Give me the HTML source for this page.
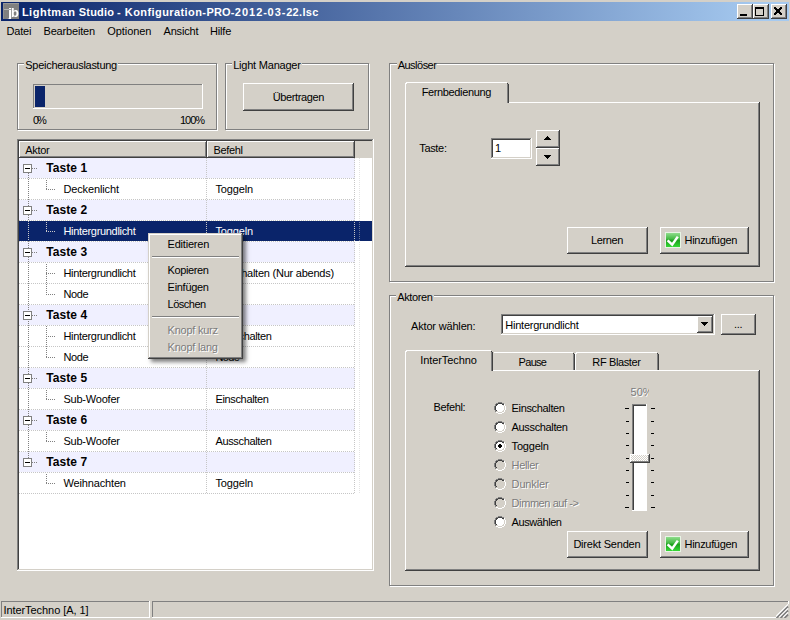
<!DOCTYPE html>
<html><head><meta charset="utf-8"><title>Lightman Studio</title>
<style>
*{box-sizing:border-box;margin:0;padding:0}
html,body{width:790px;height:620px;overflow:hidden;background:#d4d0c8}
body{position:relative;font-family:"Liberation Sans",sans-serif;font-size:11px;color:#000}
.a{position:absolute}
.t{position:absolute;white-space:pre}
.dis{color:#7c7c7c;text-shadow:1px 1px 0 #fff}
.btn{position:absolute;background:#d4d0c8;box-shadow:inset -1px -1px 0 #404040,inset 1px 1px 0 #fff,inset -2px -2px 0 #808080,inset 2px 2px 0 #d4d0c8}
.sunk{position:absolute;background:#fff;box-shadow:inset -1px -1px 0 #fff,inset 1px 1px 0 #808080,inset -2px -2px 0 #d4d0c8,inset 2px 2px 0 #404040}
.grp{position:absolute;border:1px solid #808080;box-shadow:1px 1px 0 #fff,inset 1px 1px 0 #fff}
.page{position:absolute;box-shadow:inset -1px -1px 0 #404040,inset 1px 1px 0 #fff,inset -2px -2px 0 #808080}
.tab{position:absolute;background:#d4d0c8}
.hl{position:absolute;height:1px;background-image:linear-gradient(90deg,#808080 50%,transparent 50%);background-size:2px 1px}
.vl{position:absolute;width:1px;background-image:linear-gradient(180deg,#808080 50%,transparent 50%);background-size:1px 2px}
.gl{position:absolute;height:1px;background-image:linear-gradient(90deg,#c6c6c6 50%,transparent 50%);background-size:2px 1px}
.gv{position:absolute;width:1px;background-image:linear-gradient(180deg,#c6c6c6 50%,transparent 50%);background-size:1px 2px}
</style></head><body>

<div class="a" style="left:1px;top:2px;width:788px;height:19px;background:linear-gradient(90deg,#0a246a 0%,#a6caf0 97%)"></div>
<div class="a" style="left:3px;top:3px;width:16px;height:16px;background:#808080;overflow:hidden"><div class="a" style="left:0;top:0;width:16px;height:1px;background:#989898"></div><div class="a" style="left:0;top:0;width:1px;height:16px;background:#909090"></div><div class="a" style="left:1px;top:6px;width:5px;height:1px;background:#b4b4b4"></div><span class="t" style="left:4.600px;top:3px;font-size:12px;line-height:14px;font-weight:bold;color:#fff;transform:scaleX(1.250);transform-origin:0 0">j</span><span class="t" style="left:7.600px;top:3px;font-size:12px;line-height:14px;font-weight:bold;color:#fff;transform:scaleX(1.080);transform-origin:0 0">b</span></div>
<div class="btn" style="left:737px;top:4px;width:16px;height:15px;"><div class="a" style="left:3px;top:10px;width:7px;height:2px;background:#000"></div></div>
<div class="btn" style="left:753px;top:4px;width:16px;height:15px;"><div class="a" style="left:2px;top:3px;width:9px;height:9px;border:1px solid #000;border-top-width:2px"></div></div>
<div class="btn" style="left:771px;top:4px;width:16px;height:15px;"><svg class="a" style="left:3px;top:3px" width="8" height="8" viewBox="0 0 8 7" preserveAspectRatio="none"><path d="M0 0h2l2 2 2-2h2v1l-2.5 2.5L8 6v1H6L4 5 2 7H0V6l2.5-2.500L0 1z" fill="#000" shape-rendering="crispEdges"/></svg></div>
<div class="grp" style="left:17px;top:63px;width:200px;height:67px;"></div>
<div class="grp" style="left:225px;top:63px;width:144px;height:67px;"></div>
<div class="a" style="left:33px;top:84px;width:170px;height:25px;box-shadow:inset -1px -1px 0 #fff,inset 1px 1px 0 #808080"></div>
<div class="a" style="left:35px;top:86px;width:10px;height:21px;background:#0a246a"></div>
<div class="btn" style="left:243px;top:83px;width:111px;height:28px;"></div>
<div class="sunk" style="left:17px;top:139px;width:357px;height:432px;"></div>
<div class="a" style="left:19px;top:141px;width:188px;height:17px;background:#d4d0c8;box-shadow:inset -1px -1px 0 #404040,inset 1px 1px 0 #fff,inset -2px -2px 0 #808080"></div>
<div class="a" style="left:207px;top:141px;width:148px;height:17px;background:#d4d0c8;box-shadow:inset -1px -1px 0 #404040,inset 1px 1px 0 #fff,inset -2px -2px 0 #808080"></div>
<div class="a" style="left:355px;top:141px;width:17px;height:17px;background:#d4d0c8"></div>
<div class="a" style="left:19px;top:158px;width:336px;height:20px;background:#f0f0ff"></div>
<div class="gl" style="left:19px;top:178px;width:336px;height:1px;"></div>
<div class="gl" style="left:19px;top:199px;width:336px;height:1px;"></div>
<div class="a" style="left:19px;top:200px;width:336px;height:20px;background:#f0f0ff"></div>
<div class="gl" style="left:19px;top:220px;width:336px;height:1px;"></div>
<div class="a" style="left:19px;top:221px;width:353px;height:20px;background:#0a246a"></div>
<div class="gl" style="left:19px;top:241px;width:336px;height:1px;"></div>
<div class="a" style="left:19px;top:242px;width:336px;height:20px;background:#f0f0ff"></div>
<div class="gl" style="left:19px;top:262px;width:336px;height:1px;"></div>
<div class="gl" style="left:19px;top:283px;width:336px;height:1px;"></div>
<div class="gl" style="left:19px;top:304px;width:336px;height:1px;"></div>
<div class="a" style="left:19px;top:305px;width:336px;height:20px;background:#f0f0ff"></div>
<div class="gl" style="left:19px;top:325px;width:336px;height:1px;"></div>
<div class="gl" style="left:19px;top:346px;width:336px;height:1px;"></div>
<div class="gl" style="left:19px;top:367px;width:336px;height:1px;"></div>
<div class="a" style="left:19px;top:368px;width:336px;height:20px;background:#f0f0ff"></div>
<div class="gl" style="left:19px;top:388px;width:336px;height:1px;"></div>
<div class="gl" style="left:19px;top:409px;width:336px;height:1px;"></div>
<div class="a" style="left:19px;top:410px;width:336px;height:20px;background:#f0f0ff"></div>
<div class="gl" style="left:19px;top:430px;width:336px;height:1px;"></div>
<div class="gl" style="left:19px;top:451px;width:336px;height:1px;"></div>
<div class="a" style="left:19px;top:452px;width:336px;height:20px;background:#f0f0ff"></div>
<div class="gl" style="left:19px;top:472px;width:336px;height:1px;"></div>
<div class="gl" style="left:19px;top:493px;width:336px;height:1px;"></div>
<div class="gv" style="left:206px;top:158px;width:1px;height:336px;"></div>
<div class="gv" style="left:354px;top:158px;width:1px;height:336px;"></div>
<div class="gv" style="left:359px;top:158px;width:1px;height:336px;opacity:.5"></div>
<div class="vl" style="left:28px;top:173px;width:1px;height:285px;"></div>
<div class="hl" style="left:32px;top:168px;width:6px;height:1px;"></div>
<div class="a" style="left:23px;top:164px;width:9px;height:9px;background:#fff;border:1px solid #808080"><div class="a" style="left:1px;top:3px;width:5px;height:1px;background:#000"></div></div>
<div class="vl" style="left:46px;top:180px;width:1px;height:9px;"></div>
<div class="hl" style="left:46px;top:189px;width:9px;height:1px;"></div>
<div class="hl" style="left:32px;top:210px;width:6px;height:1px;"></div>
<div class="a" style="left:23px;top:206px;width:9px;height:9px;background:#fff;border:1px solid #808080"><div class="a" style="left:1px;top:3px;width:5px;height:1px;background:#000"></div></div>
<div class="vl" style="left:46px;top:222px;width:1px;height:9px;filter:invert(1) brightness(1.6);"></div>
<div class="hl" style="left:46px;top:231px;width:9px;height:1px;filter:invert(1) brightness(1.6);"></div>
<div class="hl" style="left:32px;top:252px;width:6px;height:1px;"></div>
<div class="a" style="left:23px;top:248px;width:9px;height:9px;background:#fff;border:1px solid #808080"><div class="a" style="left:1px;top:3px;width:5px;height:1px;background:#000"></div></div>
<div class="vl" style="left:46px;top:264px;width:1px;height:9px;"></div>
<div class="hl" style="left:46px;top:273px;width:9px;height:1px;"></div>
<div class="vl" style="left:46px;top:274px;width:1px;height:20px;"></div>
<div class="hl" style="left:46px;top:294px;width:9px;height:1px;"></div>
<div class="hl" style="left:32px;top:315px;width:6px;height:1px;"></div>
<div class="a" style="left:23px;top:311px;width:9px;height:9px;background:#fff;border:1px solid #808080"><div class="a" style="left:1px;top:3px;width:5px;height:1px;background:#000"></div></div>
<div class="vl" style="left:46px;top:326px;width:1px;height:10px;"></div>
<div class="hl" style="left:46px;top:336px;width:9px;height:1px;"></div>
<div class="vl" style="left:46px;top:336px;width:1px;height:21px;"></div>
<div class="hl" style="left:46px;top:357px;width:9px;height:1px;"></div>
<div class="hl" style="left:32px;top:378px;width:6px;height:1px;"></div>
<div class="a" style="left:23px;top:374px;width:9px;height:9px;background:#fff;border:1px solid #808080"><div class="a" style="left:1px;top:3px;width:5px;height:1px;background:#000"></div></div>
<div class="vl" style="left:46px;top:390px;width:1px;height:9px;"></div>
<div class="hl" style="left:46px;top:399px;width:9px;height:1px;"></div>
<div class="hl" style="left:32px;top:420px;width:6px;height:1px;"></div>
<div class="a" style="left:23px;top:416px;width:9px;height:9px;background:#fff;border:1px solid #808080"><div class="a" style="left:1px;top:3px;width:5px;height:1px;background:#000"></div></div>
<div class="vl" style="left:46px;top:432px;width:1px;height:9px;"></div>
<div class="hl" style="left:46px;top:441px;width:9px;height:1px;"></div>
<div class="hl" style="left:32px;top:462px;width:6px;height:1px;"></div>
<div class="a" style="left:23px;top:458px;width:9px;height:9px;background:#fff;border:1px solid #808080"><div class="a" style="left:1px;top:3px;width:5px;height:1px;background:#000"></div></div>
<div class="vl" style="left:46px;top:474px;width:1px;height:9px;"></div>
<div class="hl" style="left:46px;top:483px;width:9px;height:1px;"></div>
<div class="grp" style="left:389px;top:63px;width:385px;height:219px;"></div>
<div class="grp" style="left:389px;top:295px;width:385px;height:291px;"></div>
<div class="page" style="left:405px;top:102px;width:355px;height:165px;"></div>
<div class="tab" style="left:405px;top:82px;width:104px;height:21px;box-shadow:inset -1px 0 0 #404040,inset 1px 0 0 #fff,inset 0 1px 0 #fff,inset -2px 0 0 #808080"></div>
<div class="a" style="left:405px;top:82px;width:1px;height:1px;background:#d4d0c8"></div>
<div class="a" style="left:406px;top:83px;width:1px;height:1px;background:#fff"></div>
<div class="a" style="left:507px;top:82px;width:2px;height:1px;background:#d4d0c8"></div>
<div class="a" style="left:507px;top:83px;width:1px;height:1px;background:#404040"></div>
<div class="a" style="left:508px;top:83px;width:1px;height:1px;background:#d4d0c8"></div>
<div class="page" style="left:405px;top:370px;width:355px;height:201px;"></div>
<div class="tab" style="left:493px;top:352px;width:82px;height:18px;box-shadow:inset -1px 0 0 #404040,inset 0 1px 0 #fff,inset -2px 0 0 #808080"></div>
<div class="a" style="left:493px;top:352px;width:1px;height:1px;background:#d4d0c8"></div>
<div class="a" style="left:573px;top:352px;width:2px;height:1px;background:#d4d0c8"></div>
<div class="a" style="left:573px;top:353px;width:1px;height:1px;background:#404040"></div>
<div class="a" style="left:574px;top:353px;width:1px;height:1px;background:#d4d0c8"></div>
<div class="tab" style="left:575px;top:352px;width:84px;height:18px;box-shadow:inset -1px 0 0 #404040,inset 1px 0 0 #fff,inset 0 1px 0 #fff,inset -2px 0 0 #808080"></div>
<div class="a" style="left:575px;top:352px;width:1px;height:1px;background:#d4d0c8"></div>
<div class="a" style="left:576px;top:353px;width:1px;height:1px;background:#fff"></div>
<div class="a" style="left:657px;top:352px;width:2px;height:1px;background:#d4d0c8"></div>
<div class="a" style="left:657px;top:353px;width:1px;height:1px;background:#404040"></div>
<div class="a" style="left:658px;top:353px;width:1px;height:1px;background:#d4d0c8"></div>
<div class="tab" style="left:405px;top:350px;width:88px;height:21px;box-shadow:inset -1px 0 0 #404040,inset 1px 0 0 #fff,inset 0 1px 0 #fff,inset -2px 0 0 #808080"></div>
<div class="a" style="left:405px;top:350px;width:1px;height:1px;background:#d4d0c8"></div>
<div class="a" style="left:406px;top:351px;width:1px;height:1px;background:#fff"></div>
<div class="a" style="left:491px;top:350px;width:2px;height:1px;background:#d4d0c8"></div>
<div class="a" style="left:491px;top:351px;width:1px;height:1px;background:#404040"></div>
<div class="a" style="left:492px;top:351px;width:1px;height:1px;background:#d4d0c8"></div>
<div class="sunk" style="left:491px;top:138px;width:41px;height:21px;"></div>
<div class="btn" style="left:536px;top:130px;width:24px;height:18px;"><svg class="a" style="left:8px;top:6px" width="7" height="4"><path d="M3 0h1v1h1v1h1v1h1v1H0V3h1V2h1V1h1z" fill="#000" shape-rendering="crispEdges"/></svg></div>
<div class="btn" style="left:536px;top:148px;width:24px;height:18px;"><svg class="a" style="left:8px;top:7px" width="7" height="4"><path d="M0 0h7v1H6v1H5v1H4v1H3V3H2V2H1V1H0z" fill="#000" shape-rendering="crispEdges"/></svg></div>
<div class="btn" style="left:567px;top:227px;width:81px;height:27px;"></div>
<div class="btn" style="left:660px;top:227px;width:89px;height:27px;"><svg class="a" style="left:5px;top:5px" width="16" height="16" viewBox="0 0 16 16"><defs><linearGradient id="g1" x1="0" y1="0" x2="0" y2="1"><stop offset="0" stop-color="#8fdc8c"/><stop offset=".45" stop-color="#3fb83f"/><stop offset=".5" stop-color="#1a9c1a"/><stop offset="1" stop-color="#35d835"/></linearGradient></defs><rect x="0" y="0" width="16" height="16" fill="#e8f4e4"/><rect x="1" y="1" width="14" height="14" fill="url(#g1)"/><path d="M2.600 8.300 L7.200 12.600 L12.800 4.600" fill="none" stroke="#fff" stroke-width="2.500"/></svg></div>
<div class="btn" style="left:567px;top:531px;width:81px;height:27px;"></div>
<div class="btn" style="left:660px;top:531px;width:89px;height:27px;"><svg class="a" style="left:5px;top:5px" width="16" height="16" viewBox="0 0 16 16"><defs><linearGradient id="g2" x1="0" y1="0" x2="0" y2="1"><stop offset="0" stop-color="#8fdc8c"/><stop offset=".45" stop-color="#3fb83f"/><stop offset=".5" stop-color="#1a9c1a"/><stop offset="1" stop-color="#35d835"/></linearGradient></defs><rect x="0" y="0" width="16" height="16" fill="#e8f4e4"/><rect x="1" y="1" width="14" height="14" fill="url(#g2)"/><path d="M2.600 8.300 L7.200 12.600 L12.800 4.600" fill="none" stroke="#fff" stroke-width="2.500"/></svg></div>
<div class="sunk" style="left:501px;top:314px;width:214px;height:21px;"></div>
<div class="btn" style="left:697px;top:316px;width:16px;height:17px;"><svg class="a" style="left:4px;top:6px" width="7" height="4"><path d="M0 0h7v1H6v1H5v1H4v1H3V3H2V2H1V1H0z" fill="#000" shape-rendering="crispEdges"/></svg></div>
<div class="btn" style="left:721px;top:314px;width:35px;height:21px;"></div>
<svg class="a" style="left:494px;top:402px" width="12" height="12" viewBox="0 0 12 12" shape-rendering="crispEdges"><path d="M4 0h4v1H4zM2 1h2v1H2zM8 1h2v1H8zM1 2h1v2H1zM0 4h1v4H0zM1 8h1v2H1z" fill="#808080"/><path d="M4 1h4v1H4zM2 2h2v1H2zM8 2h2v1H8zM2 3h1v1H2zM1 4h1v4H1zM2 8h1v1H2z" fill="#404040"/><path d="M10 2h1v2h-1zM11 4h1v4h-1zM10 8h1v2h-1zM8 10h2v1H8zM2 10h2v1H2zM4 11h4v1H4z" fill="#fff"/><path d="M9 3h1v1H9zM10 4h1v4h-1zM9 8h1v1H9zM8 9h2v1H8zM2 9h2v1H2zM4 10h4v1H4z" fill="#d4d0c8"/><path d="M4 2h4v1h1v1h1v4H9v1H8v1H4V9H3V8H2V4h1V3h1z" fill="#fff"/></svg>
<svg class="a" style="left:494px;top:421px" width="12" height="12" viewBox="0 0 12 12" shape-rendering="crispEdges"><path d="M4 0h4v1H4zM2 1h2v1H2zM8 1h2v1H8zM1 2h1v2H1zM0 4h1v4H0zM1 8h1v2H1z" fill="#808080"/><path d="M4 1h4v1H4zM2 2h2v1H2zM8 2h2v1H8zM2 3h1v1H2zM1 4h1v4H1zM2 8h1v1H2z" fill="#404040"/><path d="M10 2h1v2h-1zM11 4h1v4h-1zM10 8h1v2h-1zM8 10h2v1H8zM2 10h2v1H2zM4 11h4v1H4z" fill="#fff"/><path d="M9 3h1v1H9zM10 4h1v4h-1zM9 8h1v1H9zM8 9h2v1H8zM2 9h2v1H2zM4 10h4v1H4z" fill="#d4d0c8"/><path d="M4 2h4v1h1v1h1v4H9v1H8v1H4V9H3V8H2V4h1V3h1z" fill="#fff"/></svg>
<svg class="a" style="left:494px;top:440px" width="12" height="12" viewBox="0 0 12 12" shape-rendering="crispEdges"><path d="M4 0h4v1H4zM2 1h2v1H2zM8 1h2v1H8zM1 2h1v2H1zM0 4h1v4H0zM1 8h1v2H1z" fill="#808080"/><path d="M4 1h4v1H4zM2 2h2v1H2zM8 2h2v1H8zM2 3h1v1H2zM1 4h1v4H1zM2 8h1v1H2z" fill="#404040"/><path d="M10 2h1v2h-1zM11 4h1v4h-1zM10 8h1v2h-1zM8 10h2v1H8zM2 10h2v1H2zM4 11h4v1H4z" fill="#fff"/><path d="M9 3h1v1H9zM10 4h1v4h-1zM9 8h1v1H9zM8 9h2v1H8zM2 9h2v1H2zM4 10h4v1H4z" fill="#d4d0c8"/><path d="M4 2h4v1h1v1h1v4H9v1H8v1H4V9H3V8H2V4h1V3h1z" fill="#fff"/><path d="M5 4h2v1h1v2H7v1H5V7H4V5h1z" fill="#000"/></svg>
<svg class="a" style="left:494px;top:459px" width="12" height="12" viewBox="0 0 12 12" shape-rendering="crispEdges"><path d="M4 0h4v1H4zM2 1h2v1H2zM8 1h2v1H8zM1 2h1v2H1zM0 4h1v4H0zM1 8h1v2H1z" fill="#808080"/><path d="M4 1h4v1H4zM2 2h2v1H2zM8 2h2v1H8zM2 3h1v1H2zM1 4h1v4H1zM2 8h1v1H2z" fill="#404040"/><path d="M10 2h1v2h-1zM11 4h1v4h-1zM10 8h1v2h-1zM8 10h2v1H8zM2 10h2v1H2zM4 11h4v1H4z" fill="#fff"/><path d="M9 3h1v1H9zM10 4h1v4h-1zM9 8h1v1H9zM8 9h2v1H8zM2 9h2v1H2zM4 10h4v1H4z" fill="#d4d0c8"/><path d="M4 2h4v1h1v1h1v4H9v1H8v1H4V9H3V8H2V4h1V3h1z" fill="#d4d0c8"/></svg>
<svg class="a" style="left:494px;top:478px" width="12" height="12" viewBox="0 0 12 12" shape-rendering="crispEdges"><path d="M4 0h4v1H4zM2 1h2v1H2zM8 1h2v1H8zM1 2h1v2H1zM0 4h1v4H0zM1 8h1v2H1z" fill="#808080"/><path d="M4 1h4v1H4zM2 2h2v1H2zM8 2h2v1H8zM2 3h1v1H2zM1 4h1v4H1zM2 8h1v1H2z" fill="#404040"/><path d="M10 2h1v2h-1zM11 4h1v4h-1zM10 8h1v2h-1zM8 10h2v1H8zM2 10h2v1H2zM4 11h4v1H4z" fill="#fff"/><path d="M9 3h1v1H9zM10 4h1v4h-1zM9 8h1v1H9zM8 9h2v1H8zM2 9h2v1H2zM4 10h4v1H4z" fill="#d4d0c8"/><path d="M4 2h4v1h1v1h1v4H9v1H8v1H4V9H3V8H2V4h1V3h1z" fill="#d4d0c8"/></svg>
<svg class="a" style="left:494px;top:497px" width="12" height="12" viewBox="0 0 12 12" shape-rendering="crispEdges"><path d="M4 0h4v1H4zM2 1h2v1H2zM8 1h2v1H8zM1 2h1v2H1zM0 4h1v4H0zM1 8h1v2H1z" fill="#808080"/><path d="M4 1h4v1H4zM2 2h2v1H2zM8 2h2v1H8zM2 3h1v1H2zM1 4h1v4H1zM2 8h1v1H2z" fill="#404040"/><path d="M10 2h1v2h-1zM11 4h1v4h-1zM10 8h1v2h-1zM8 10h2v1H8zM2 10h2v1H2zM4 11h4v1H4z" fill="#fff"/><path d="M9 3h1v1H9zM10 4h1v4h-1zM9 8h1v1H9zM8 9h2v1H8zM2 9h2v1H2zM4 10h4v1H4z" fill="#d4d0c8"/><path d="M4 2h4v1h1v1h1v4H9v1H8v1H4V9H3V8H2V4h1V3h1z" fill="#d4d0c8"/></svg>
<svg class="a" style="left:494px;top:516px" width="12" height="12" viewBox="0 0 12 12" shape-rendering="crispEdges"><path d="M4 0h4v1H4zM2 1h2v1H2zM8 1h2v1H8zM1 2h1v2H1zM0 4h1v4H0zM1 8h1v2H1z" fill="#808080"/><path d="M4 1h4v1H4zM2 2h2v1H2zM8 2h2v1H8zM2 3h1v1H2zM1 4h1v4H1zM2 8h1v1H2z" fill="#404040"/><path d="M10 2h1v2h-1zM11 4h1v4h-1zM10 8h1v2h-1zM8 10h2v1H8zM2 10h2v1H2zM4 11h4v1H4z" fill="#fff"/><path d="M9 3h1v1H9zM10 4h1v4h-1zM9 8h1v1H9zM8 9h2v1H8zM2 9h2v1H2zM4 10h4v1H4z" fill="#d4d0c8"/><path d="M4 2h4v1h1v1h1v4H9v1H8v1H4V9H3V8H2V4h1V3h1z" fill="#fff"/></svg>
<div class="a" style="left:632px;top:404px;width:15px;height:107px;background:#fff;box-shadow:inset -1px -1px 0 #fff,inset 1px 1px 0 #808080,inset 2px 2px 0 #404040"></div>
<div class="a" style="left:625px;top:408px;width:4px;height:1px;background:#000"></div>
<div class="a" style="left:651px;top:408px;width:4px;height:1px;background:#000"></div>
<div class="a" style="left:626px;top:421px;width:3px;height:1px;background:#000"></div>
<div class="a" style="left:651px;top:421px;width:3px;height:1px;background:#000"></div>
<div class="a" style="left:626px;top:433px;width:3px;height:1px;background:#000"></div>
<div class="a" style="left:651px;top:433px;width:3px;height:1px;background:#000"></div>
<div class="a" style="left:626px;top:445px;width:3px;height:1px;background:#000"></div>
<div class="a" style="left:651px;top:445px;width:3px;height:1px;background:#000"></div>
<div class="a" style="left:626px;top:458px;width:3px;height:1px;background:#000"></div>
<div class="a" style="left:651px;top:458px;width:3px;height:1px;background:#000"></div>
<div class="a" style="left:626px;top:470px;width:3px;height:1px;background:#000"></div>
<div class="a" style="left:651px;top:470px;width:3px;height:1px;background:#000"></div>
<div class="a" style="left:626px;top:482px;width:3px;height:1px;background:#000"></div>
<div class="a" style="left:651px;top:482px;width:3px;height:1px;background:#000"></div>
<div class="a" style="left:626px;top:495px;width:3px;height:1px;background:#000"></div>
<div class="a" style="left:651px;top:495px;width:3px;height:1px;background:#000"></div>
<div class="a" style="left:625px;top:507px;width:4px;height:1px;background:#000"></div>
<div class="a" style="left:651px;top:507px;width:4px;height:1px;background:#000"></div>
<div class="a" style="left:630px;top:454px;width:20px;height:9px;background-color:#d4d0c8;background-image:conic-gradient(#fff 25%,#d4d0c8 0 50%,#fff 0 75%,#d4d0c8 0);background-size:2px 2px;box-shadow:inset -1px -1px 0 #404040,inset 1px 1px 0 #fff,inset -2px -2px 0 #808080"></div>
<div class="a" style="left:1px;top:601px;width:149px;height:17px;box-shadow:inset -1px -1px 0 #fff,inset 1px 1px 0 #808080"></div>
<div class="a" style="left:152px;top:601px;width:637px;height:17px;box-shadow:inset -1px -1px 0 #fff,inset 1px 1px 0 #808080"></div>
<svg class="a" style="left:776px;top:604px" width="13" height="14" viewBox="0 -1 13 14"><rect x="0" y="12" width="13" height="1" fill="#d4d0c8"/><rect x="12" y="-1" width="1" height="14" fill="#d4d0c8"/><path d="M0.500 13L12 1.500M4.500 13L12 5.500M8.500 13L12 9.500" stroke="#808080" stroke-width="1.900"/><path d="M-0.700 12.100L12 -0.600M3.300 12.100L12 3.400M7.300 12.100L12 7.400" stroke="#fff" stroke-width="1.100"/></svg>
<div class="vl" style="left:28px;top:221px;width:1px;height:20px;filter:invert(1) brightness(1.600)"></div>
<span class="t" style="left:21.90px;top:6.00px;font-size:11px;line-height:13px;letter-spacing:0.514px;font-weight:bold;color:#fff;">Lightman</span>
<span class="t" style="left:78.80px;top:6.00px;font-size:11px;line-height:13px;letter-spacing:0.196px;font-weight:bold;color:#fff;">Studio</span>
<span class="t" style="left:116.90px;top:6.00px;font-size:11px;line-height:13px;letter-spacing:0.000px;font-weight:bold;color:#fff;">-</span>
<span class="t" style="left:124.80px;top:6.00px;font-size:11px;line-height:13px;letter-spacing:0.418px;font-weight:bold;color:#fff;">Konfiguration-</span>
<span class="t" style="left:206.40px;top:6.00px;font-size:11px;line-height:13px;letter-spacing:0.200px;font-weight:bold;color:#fff;">PRO-</span>
<span class="t" style="left:234.80px;top:6.00px;font-size:11px;line-height:13px;letter-spacing:1.015px;font-weight:bold;color:#fff;">2012-</span>
<span class="t" style="left:267.50px;top:6.00px;font-size:11px;line-height:13px;letter-spacing:1.047px;font-weight:bold;color:#fff;">03-</span>
<span class="t" style="left:286.20px;top:6.00px;font-size:11px;line-height:13px;letter-spacing:0.301px;font-weight:bold;color:#fff;">22.lsc</span>
<span class="t" style="left:6.60px;top:25.00px;font-size:11px;line-height:13px;letter-spacing:-0.222px;">Datei</span>
<span class="t" style="left:43.50px;top:25.00px;font-size:11px;line-height:13px;letter-spacing:-0.169px;">Bearbeiten</span>
<span class="t" style="left:107.30px;top:25.00px;font-size:11px;line-height:13px;letter-spacing:-0.079px;">Optionen</span>
<span class="t" style="left:163.50px;top:25.00px;font-size:11px;line-height:13px;letter-spacing:-0.180px;">Ansicht</span>
<span class="t" style="left:210.00px;top:25.00px;font-size:11px;line-height:13px;letter-spacing:-0.154px;">Hilfe</span>
<span class="t" style="left:25.30px;top:59.00px;font-size:11px;line-height:13px;letter-spacing:-0.278px;background:#d4d0c8;padding:0 1px 0 1px;margin-left:-1px">Speicherauslastung</span>
<span class="t" style="left:33.00px;top:114.00px;font-size:11px;line-height:13px;letter-spacing:-2.106px;">0%</span>
<span class="t" style="left:180.00px;top:114.00px;font-size:11px;line-height:13px;letter-spacing:-1.047px;">100%</span>
<span class="t" style="left:233.20px;top:59.00px;font-size:11px;line-height:13px;letter-spacing:-0.219px;background:#d4d0c8;padding:0 1px 0 1px;margin-left:-1px">Light Manager</span>
<span class="t" style="left:272.80px;top:91.00px;font-size:11px;line-height:13px;letter-spacing:-0.394px;">Übertragen</span>
<span class="t" style="left:25.30px;top:144.00px;font-size:11px;line-height:13px;letter-spacing:-0.347px;">Aktor</span>
<span class="t" style="left:213.50px;top:144.00px;font-size:11px;line-height:13px;letter-spacing:-0.341px;">Befehl</span>
<span class="t" style="left:397.70px;top:59.00px;font-size:11px;line-height:13px;letter-spacing:-0.514px;background:#d4d0c8;padding:0 1px 0 1px;margin-left:-1px">Auslöser</span>
<span class="t" style="left:421.70px;top:86.00px;font-size:11px;line-height:13px;letter-spacing:-0.368px;">Fernbedienung</span>
<span class="t" style="left:419.20px;top:142.00px;font-size:11px;line-height:13px;letter-spacing:-0.312px;">Taste:</span>
<span class="t" style="left:495.00px;top:142.00px;font-size:11px;line-height:13px;letter-spacing:0.000px;">1</span>
<span class="t" style="left:591.00px;top:234.00px;font-size:11px;line-height:13px;letter-spacing:-0.353px;">Lernen</span>
<span class="t" style="left:684.60px;top:234.00px;font-size:11px;line-height:13px;letter-spacing:-0.317px;">Hinzufügen</span>
<span class="t" style="left:397.20px;top:291.00px;font-size:11px;line-height:13px;letter-spacing:-0.354px;background:#d4d0c8;padding:0 1px 0 1px;margin-left:-1px">Aktoren</span>
<span class="t" style="left:411.00px;top:320.00px;font-size:11px;line-height:13px;letter-spacing:-0.171px;">Aktor wählen:</span>
<span class="t" style="left:505.30px;top:319.00px;font-size:11px;line-height:13px;letter-spacing:-0.243px;">Hintergrundlicht</span>
<span class="t" style="left:734.00px;top:318.00px;font-size:11px;line-height:13px;letter-spacing:-0.336px;">...</span>
<span class="t" style="left:420.20px;top:354.00px;font-size:11px;line-height:13px;letter-spacing:-0.068px;">InterTechno</span>
<span class="t" style="left:518.60px;top:356.00px;font-size:11px;line-height:13px;letter-spacing:-0.701px;">Pause</span>
<span class="t" style="left:592.30px;top:356.00px;font-size:11px;line-height:13px;letter-spacing:-0.363px;">RF Blaster</span>
<span class="t" style="left:433.60px;top:401.00px;font-size:11px;line-height:13px;letter-spacing:-0.375px;">Befehl:</span>
<span class="t dis" style="left:630.60px;top:386.00px;font-size:11px;line-height:13px;letter-spacing:0.000px;width:18.5px;overflow:hidden">50%</span>
<span class="t" style="left:573.40px;top:538.00px;font-size:11px;line-height:13px;letter-spacing:-0.210px;">Direkt Senden</span>
<span class="t" style="left:684.60px;top:538.00px;font-size:11px;line-height:13px;letter-spacing:-0.317px;">Hinzufügen</span>
<span class="t" style="left:3.40px;top:604.00px;font-size:11px;line-height:13px;letter-spacing:-0.060px;">InterTechno [A, 1]</span>
<span class="t" style="left:511.60px;top:402.00px;font-size:11px;line-height:13px;letter-spacing:-0.348px;">Einschalten</span>
<span class="t" style="left:511.60px;top:421.00px;font-size:11px;line-height:13px;letter-spacing:-0.354px;">Ausschalten</span>
<span class="t" style="left:511.60px;top:440.00px;font-size:11px;line-height:13px;letter-spacing:-0.191px;">Toggeln</span>
<span class="t dis" style="left:511.60px;top:459.00px;font-size:11px;line-height:13px;letter-spacing:-0.327px;">Heller</span>
<span class="t dis" style="left:511.60px;top:478.00px;font-size:11px;line-height:13px;letter-spacing:-0.151px;">Dunkler</span>
<span class="t dis" style="left:511.60px;top:497.00px;font-size:11px;line-height:13px;letter-spacing:-0.421px;">Dimmen auf -&gt;</span>
<span class="t" style="left:511.60px;top:516.00px;font-size:11px;line-height:13px;letter-spacing:-0.429px;">Auswählen</span>
<span class="t" style="left:46.30px;top:161.00px;font-size:12px;line-height:14px;letter-spacing:0.072px;font-weight:bold;">Taste 1</span>
<span class="t" style="left:63.40px;top:183.00px;font-size:11px;line-height:13px;letter-spacing:-0.126px;">Deckenlicht</span>
<span class="t" style="left:215.40px;top:183.00px;font-size:11px;line-height:13px;letter-spacing:-0.124px;">Toggeln</span>
<span class="t" style="left:46.30px;top:203.00px;font-size:12px;line-height:14px;letter-spacing:0.072px;font-weight:bold;">Taste 2</span>
<span class="t" style="left:63.40px;top:225.00px;font-size:11px;line-height:13px;letter-spacing:-0.316px;color:#fff;">Hintergrundlicht</span>
<span class="t" style="left:215.40px;top:225.00px;font-size:11px;line-height:13px;letter-spacing:-0.124px;color:#fff;">Toggeln</span>
<span class="t" style="left:46.30px;top:245.00px;font-size:12px;line-height:14px;letter-spacing:0.072px;font-weight:bold;">Taste 3</span>
<span class="t" style="left:63.40px;top:267.00px;font-size:11px;line-height:13px;letter-spacing:-0.316px;">Hintergrundlicht</span>
<span class="t" style="left:215.40px;top:267.00px;font-size:11px;line-height:13px;letter-spacing:-0.232px;">Einschalten (Nur abends)</span>
<span class="t" style="left:63.40px;top:288.00px;font-size:11px;line-height:13px;letter-spacing:-0.366px;">Node</span>
<span class="t" style="left:215.40px;top:288.00px;font-size:11px;line-height:13px;letter-spacing:-0.566px;">Node</span>
<span class="t" style="left:46.30px;top:308.00px;font-size:12px;line-height:14px;letter-spacing:0.072px;font-weight:bold;">Taste 4</span>
<span class="t" style="left:63.40px;top:330.00px;font-size:11px;line-height:13px;letter-spacing:-0.316px;">Hintergrundlicht</span>
<span class="t" style="left:215.40px;top:330.00px;font-size:11px;line-height:13px;letter-spacing:-0.344px;">Ausschalten</span>
<span class="t" style="left:63.40px;top:351.00px;font-size:11px;line-height:13px;letter-spacing:-0.366px;">Node</span>
<span class="t" style="left:215.40px;top:351.00px;font-size:11px;line-height:13px;letter-spacing:-0.566px;">Node</span>
<span class="t" style="left:46.30px;top:371.00px;font-size:12px;line-height:14px;letter-spacing:0.072px;font-weight:bold;">Taste 5</span>
<span class="t" style="left:63.40px;top:393.00px;font-size:11px;line-height:13px;letter-spacing:-0.211px;">Sub-Woofer</span>
<span class="t" style="left:215.40px;top:393.00px;font-size:11px;line-height:13px;letter-spacing:-0.338px;">Einschalten</span>
<span class="t" style="left:46.30px;top:413.00px;font-size:12px;line-height:14px;letter-spacing:0.072px;font-weight:bold;">Taste 6</span>
<span class="t" style="left:63.40px;top:435.00px;font-size:11px;line-height:13px;letter-spacing:-0.211px;">Sub-Woofer</span>
<span class="t" style="left:215.40px;top:435.00px;font-size:11px;line-height:13px;letter-spacing:-0.344px;">Ausschalten</span>
<span class="t" style="left:46.30px;top:455.00px;font-size:12px;line-height:14px;letter-spacing:0.072px;font-weight:bold;">Taste 7</span>
<span class="t" style="left:63.40px;top:477.00px;font-size:11px;line-height:13px;letter-spacing:-0.142px;">Weihnachten</span>
<span class="t" style="left:215.40px;top:477.00px;font-size:11px;line-height:13px;letter-spacing:-0.124px;">Toggeln</span>
<div class="a" style="left:148px;top:233px;width:95px;height:126px;background:#d4d0c8;box-shadow:inset -1px -1px 0 #404040,inset 1px 1px 0 #d4d0c8,inset -2px -2px 0 #808080,inset 2px 2px 0 #fff,3px 3px 4px rgba(0,0,0,.5)"></div>
<div class="a" style="left:152px;top:256px;width:87px;height:1px;background:#808080"></div>
<div class="a" style="left:152px;top:257px;width:87px;height:1px;background:#fff"></div>
<div class="a" style="left:152px;top:316px;width:87px;height:1px;background:#808080"></div>
<div class="a" style="left:152px;top:317px;width:87px;height:1px;background:#fff"></div>
<span class="t" style="left:167.60px;top:238.00px;font-size:11px;line-height:13px;letter-spacing:-0.215px;">Editieren</span>
<span class="t" style="left:167.60px;top:264.00px;font-size:11px;line-height:13px;letter-spacing:-0.378px;">Kopieren</span>
<span class="t" style="left:167.60px;top:281.00px;font-size:11px;line-height:13px;letter-spacing:-0.291px;">Einfügen</span>
<span class="t" style="left:167.60px;top:298.00px;font-size:11px;line-height:13px;letter-spacing:-0.499px;">Löschen</span>
<span class="t dis" style="left:167.60px;top:324.00px;font-size:11px;line-height:13px;letter-spacing:-0.244px;">Knopf kurz</span>
<span class="t dis" style="left:167.60px;top:341.00px;font-size:11px;line-height:13px;letter-spacing:-0.245px;">Knopf lang</span>
</body></html>
